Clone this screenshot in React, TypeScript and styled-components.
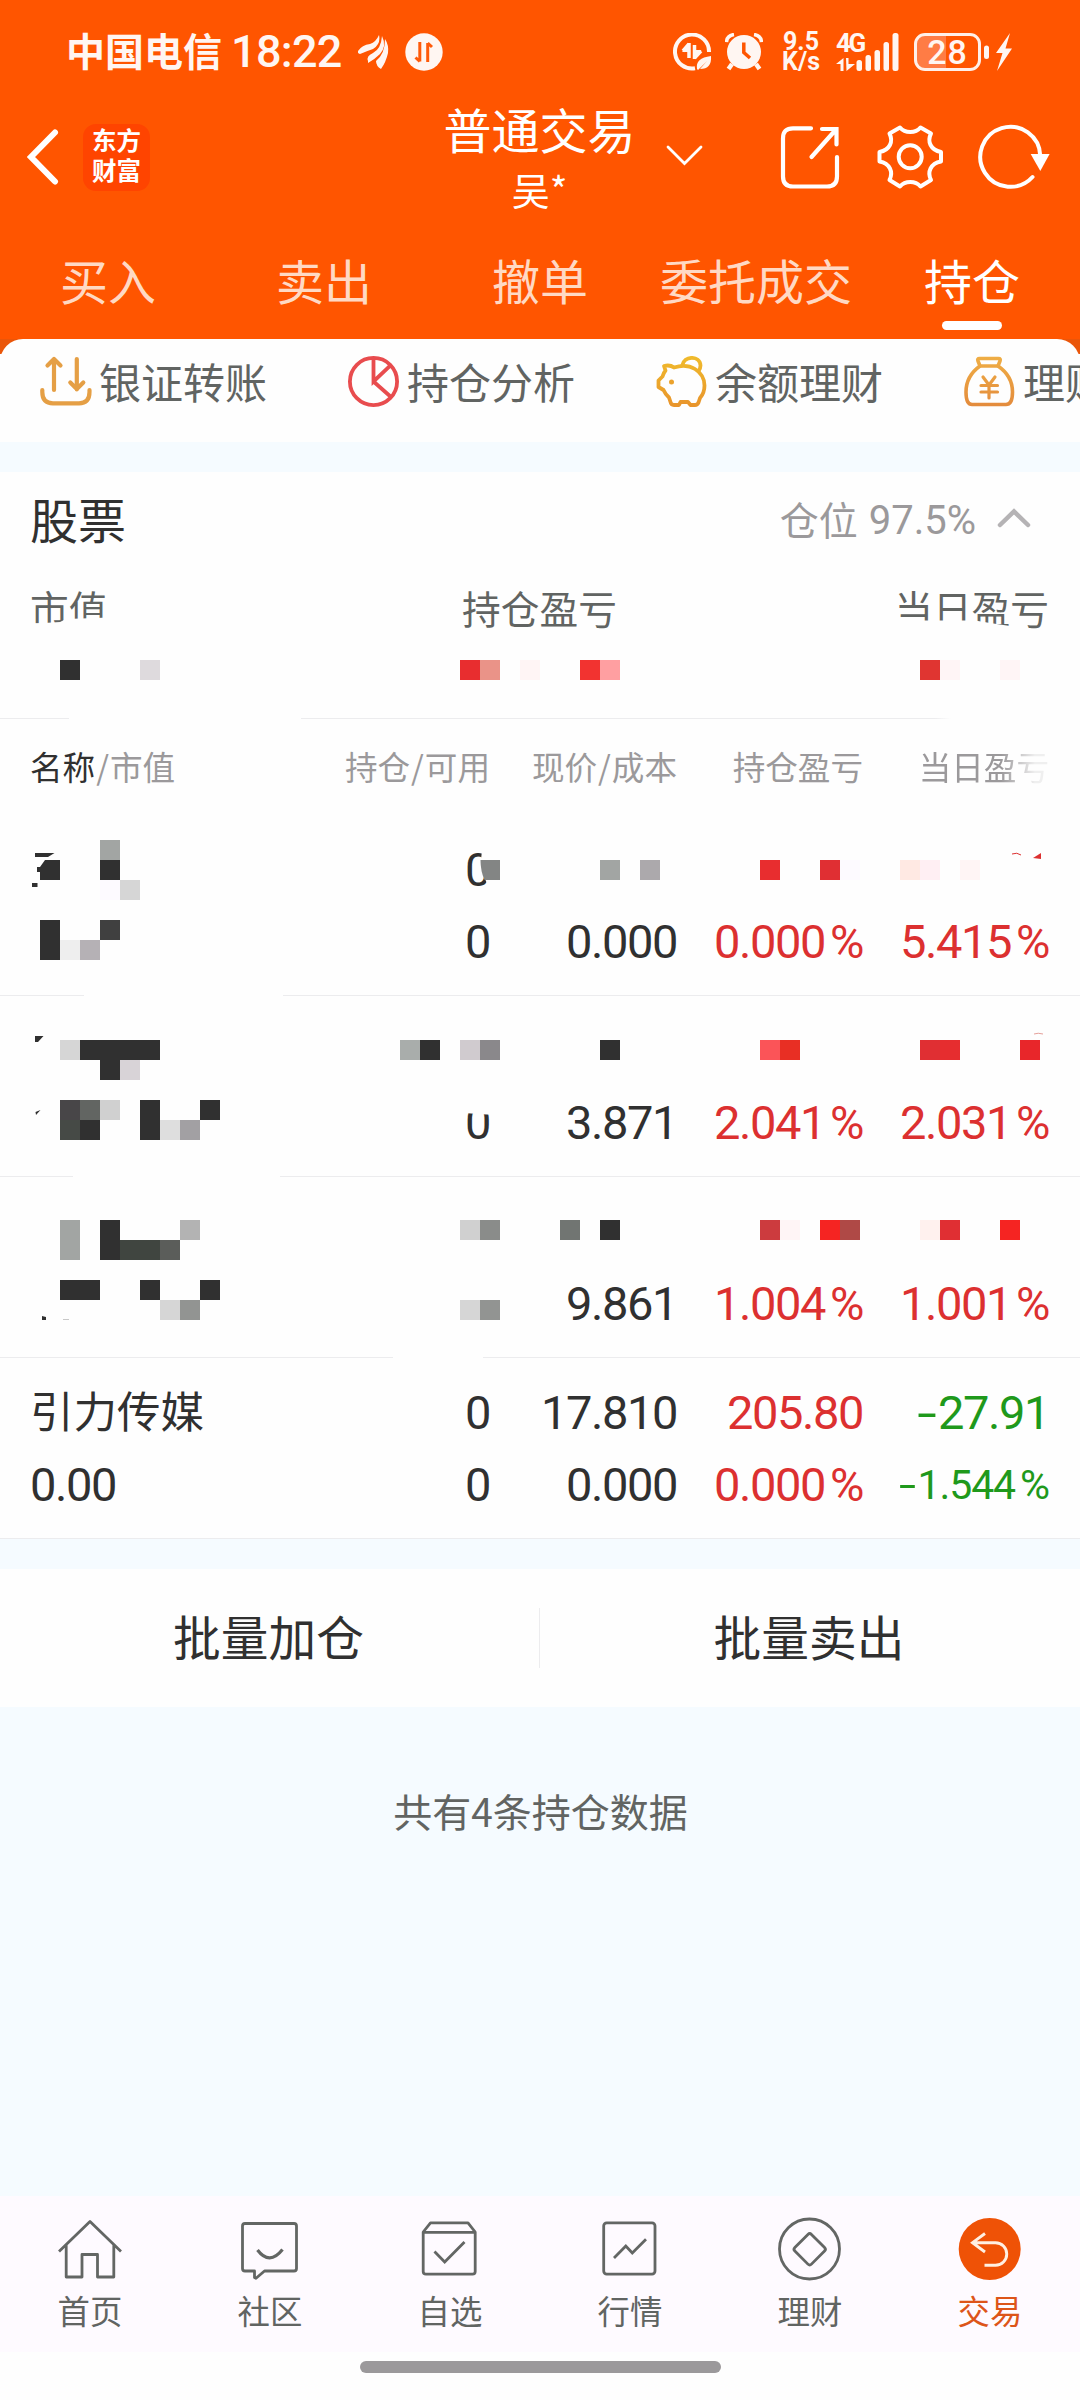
import React from "react";
import styled, { createGlobalStyle } from "styled-components";

const CJK = `"Noto Sans CJK SC", "Noto Sans", sans-serif`;
const NUM = `Roboto, "Noto Sans CJK SC", sans-serif`;

const color = {
  brand: "#ff5500",
  ink: "#303030",
  label: "#616462",
  muted: "#9b999b",
  up: "#dc3030",
  down: "#1f991b",
  band: "#f5fbff",
  line: "#ececee",
};

const GlobalStyle = createGlobalStyle`
  * { box-sizing: border-box; }
  body { margin: 0; background: #fefefe; font-family: ${CJK}; color: ${color.ink}; }
  svg { display: block; flex: none; }
`;

const Screen = styled.div`
  width: 1080px;
  height: 2400px;
  display: flex;
  flex-direction: column;
  overflow: hidden;
  background: #fefefe;
  white-space: nowrap;
`;

/* ---------- status bar ---------- */

const Top = styled.header`
  background: ${color.brand};
  color: #fff;
  height: 339px;
  flex: none;
`;

const StatusBar = styled.div`
  height: 96px;
  padding: 8px 67px 0 66px;
  display: flex;
  align-items: center;
  justify-content: space-between;
  color: #fff6f2;
`;

const StatusSide = styled.div`
  display: flex;
  align-items: center;
`;

const Carrier = styled.span`
  font-size: 39px;
  line-height: 44px;
  font-weight: 700;
  margin: -6px 9px 0 0;
`;

const Clock = styled.span`
  font: 500 45px/44px ${NUM};
  letter-spacing: -0.7px;
  margin: -1px 16px 0 0;
`;

const NetSpeed = styled.div`
  font: 700 25px/20px ${NUM};
  width: 40px;
  margin: 0 15px 0 18px;
  text-align: center;
  span { display: block; }
`;

const SignalBox = styled.div`
  display: flex;
  flex-direction: column;
  width: 64px;
  margin-right: 14px;
  height: 40px;
  position: relative;
`;

const SignalTag = styled.span`
  position: absolute;
  left: 0;
  top: 0;
  font: 700 26px/22px ${NUM};
  letter-spacing: -2.5px;
`;

const Battery = styled.div`
  width: 67px;
  height: 38px;
  border: 3px solid #fff0ea;
  border-radius: 11px;
  margin-right: 3px;
  display: flex;
  align-items: center;
  justify-content: center;
  background: linear-gradient(90deg, #ff7c45 0 29px, transparent 29px);
  font: 500 34px/32px ${NUM};
  letter-spacing: 1px;
`;

/* ---------- title bar ---------- */

const TitleBar = styled.div`
  height: 122px;
  display: grid;
  grid-template-columns: 400px 264px 1fr;
`;

const BarSide = styled.div`
  display: flex;
  align-items: center;
`;

const Logo = styled.div`
  width: 67px;
  height: 67px;
  margin-left: 24px;
  border-radius: 13px;
  background: #ff4400;
  display: flex;
  flex-direction: column;
  align-items: center;
  justify-content: center;
  font-size: 24.5px;
  line-height: 30px;
  font-weight: 700;
  padding-bottom: 5px;
`;

const Account = styled.div`
  padding-left: 15px;
  text-align: center;
  font-size: 48px;
  line-height: 64px;
`;

const Holder = styled.div`
  font-size: 38px;
  line-height: 58px;
`;

const ShareSlot = styled.div` margin-left: 74px; `;
const GearSlot = styled.div` margin: 0 32px 0 33px; `;

const Tabs = styled.nav`
  display: grid;
  grid-template-columns: repeat(5, 216px);
`;

const Tab = styled.div<{ $active?: boolean }>`
  padding-top: 30px;
  display: flex;
  flex-direction: column;
  align-items: center;
  font-size: 48px;
  line-height: 63px;
  color: ${(p) => (p.$active ? "#fff" : "#ffd9c4")};
  &::after {
    content: "";
    width: 60px;
    height: 9px;
    margin-top: 10px;
    border-radius: 5px;
    background: ${(p) => (p.$active ? "#fff" : "transparent")};
  }
`;

/* ---------- shortcuts ---------- */

const CardEdge = styled.div`
  height: 15px;
  flex: none;
  overflow: hidden;
  background: #ea560a;
  &::before {
    content: "";
    display: block;
    height: 30px;
    border-radius: 23px 23px 0 0;
    background: #fefefe;
  }
`;

const Shortcuts = styled.div`
  height: 88px;
  flex: none;
  display: flex;
  padding-left: 40px;
`;

const Shortcut = styled.div`
  flex: 0 0 308px;
  display: flex;
  gap: 7px;
  padding-top: 2px;
  font-size: 42px;
  line-height: 50px;
  color: ${color.label};
`;

const Band = styled.div<{ $h: number }>`
  height: ${(p) => p.$h}px;
  flex: none;
  background: ${color.band};
`;

/* ---------- holdings summary ---------- */

const SectionHead = styled.div`
  height: 92px;
  flex: none;
  display: flex;
  align-items: center;
  justify-content: space-between;
  padding: 0 49px 0 30px;
`;

const SectionTitle = styled.h2`
  margin: -1px 0 0;
  font-size: 48px;
  line-height: 60px;
  font-weight: 400;
`;

const Position = styled.div`
  display: flex;
  align-items: center;
  font-size: 39px;
  line-height: 50px;
  color: ${color.muted};
`;

const PositionValue = styled.span`
  font: 400 40px/50px ${NUM};
  margin: 5px 21px 0 11px;
`;

const Summary = styled.div`
  position: relative;
  height: 154px;
  flex: none;
  display: grid;
  grid-template-columns: 1fr 1fr 1fr;
  padding: 14px 31px 0 30px;
  font-size: 38.7px;
  line-height: 58px;
  color: ${color.label};
`;

const SummaryLabel = styled.span<{ $align: string }>`
  text-align: ${(p) => p.$align};
`;

const Rule = styled.div<{ $from?: number; $to?: number; $tail?: number }>`
  height: 1px;
  flex: none;
  background: ${(p) =>
    `linear-gradient(90deg, ${color.line} ${p.$from ?? 0}px, transparent ${p.$from ?? 0}px ${p.$to ?? 0}px, ${color.line} ${p.$to ?? 0}px ${p.$tail ?? 1080}px, transparent ${(p.$tail ?? 1080) + 16}px)`};
`;

/* ---------- table ---------- */

const gridColumns = "280px 180px 187px 186px 186px";

const HeadRow = styled.div`
  height: 96px;
  flex: none;
  display: grid;
  grid-template-columns: ${gridColumns};
  align-items: center;
  padding: 0 0 2px 30px;
  font-size: 32.6px;
  line-height: 44px;
  color: ${color.muted};
  text-align: right;
  span:first-child { text-align: left; }
  b { font-weight: 400; color: ${color.ink}; }
  i { font-style: normal; margin: 0 1px; }
`;

const Fading = styled.span`
  -webkit-mask-image: linear-gradient(90deg, #000 138px, rgba(0, 0, 0, 0.15) 172px);
  mask-image: linear-gradient(90deg, #000 138px, rgba(0, 0, 0, 0.15) 172px);
`;

const Row = styled.div`
  position: relative;
  height: 180px;
  flex: none;
  display: grid;
  grid-template-columns: ${gridColumns};
  grid-template-rows: 72px 72px;
  padding: 19px 0 0 30px;
`;

const Cell = styled.span<{ $tone?: string; $small?: boolean; $left?: boolean }>`
  font: 400 ${(p) => (p.$small ? 41 : 47)}px/72px ${NUM};
  letter-spacing: ${(p) => (p.$small ? -1.1 : -1.4)}px;
  color: ${(p) => p.$tone ?? color.ink};
  text-align: ${(p) => (p.$left ? "left" : "right")};
`;

const Minus = styled.span`
  display: inline-block;
  transform: scaleX(1.5);
  transform-origin: right center;
  margin: 0 3px 0 5px;
`;

const Percent = styled.span`
  margin-left: 5px;
`;

const StockName = styled.span`
  font-size: 43.5px;
  line-height: 66px;
`;

const Overlay = styled.svg`
  position: absolute;
  left: 0;
  top: 0;
`;

/* ---------- actions and footer ---------- */

const Actions = styled.div`
  height: 138px;
  flex: none;
  display: grid;
  grid-template-columns: 539px 1px 540px;
  align-items: center;
  text-align: center;
  font-size: 47.7px;
  line-height: 60px;
  padding-bottom: 5px;
  span { margin-left: -2px; }
`;

const Separator = styled.div`
  height: 60px;
  margin-top: 5px;
  background: ${color.line};
`;

const Note = styled.div`
  flex: 1;
  background: ${color.band};
  text-align: center;
  padding: 74px 0 0 1px;
  font-size: 39px;
  line-height: 58px;
  color: ${color.label};
`;

const NavBar = styled.nav`
  height: 156px;
  flex: none;
  display: grid;
  grid-template-columns: repeat(6, 180px);
  background: #fefaff;
`;

const NavItem = styled.div<{ $active?: boolean }>`
  display: flex;
  flex-direction: column;
  align-items: center;
  padding-top: 21px;
  font-size: 32.4px;
  line-height: 44px;
  color: ${(p) => (p.$active ? "#dd5519" : color.label)};
  svg { margin-bottom: 7px; }
`;

const GestureArea = styled.div`
  height: 48px;
  flex: none;
  display: flex;
  justify-content: center;
  padding-top: 9px;
  background: #fefefe;
`;

const GestureBar = styled.div`
  width: 361px;
  height: 12px;
  border-radius: 6px;
  background: ${color.muted};
`;

/* ---------- mosaics ---------- */

type Tile = [x: number, y: number, fill: string, w?: number, h?: number];

const D = "#303030";

const Tiles = ({ items }: { items: Tile[] }) => (
  <g shapeRendering="crispEdges">
    {items.map(([x, y, fill, w = 20, h = 20]) => (
      <rect key={`${x}-${y}`} x={x} y={y} width={w} height={h} fill={fill} />
    ))}
  </g>
);

const summaryTiles: Tile[] = [
  [60, 660, D], [140, 660, "#dedadd"], [460, 660, "#e82d2f"], [480, 660, "#ea9388"],
  [520, 660, "#fff5f5"], [580, 660, "#f23330"], [600, 660, "#ff9fa1"],
  [920, 660, "#e03531"], [940, 660, "#fff5f6"], [1000, 660, "#fff5f6"],
];

const rowOneTiles: Tile[] = [
  [100, 840, "#a2a5a3"], [100, 860, D], [100, 880, "#fdfaff"], [120, 880, "#d6d6d6"],
  [40, 920, D, 20, 40], [60, 940, "#eeeeee"], [80, 940, "#b5b1b5"], [100, 920, "#404040"],
  [600, 860, "#a2a5a3"], [640, 860, "#aca9ac"], [760, 860, "#e82d2f"], [820, 860, "#e02f33"],
  [840, 860, "#fdfaff"], [900, 860, "#ffe9e3"], [920, 860, "#ffeff3"], [960, 860, "#fff5f5"],
];

const rowTwoTiles: Tile[] = [
  [60, 1040, "#d6d6d6"], [80, 1040, D, 80], [100, 1060, D], [120, 1060, "#d8d3d7"],
  [60, 1100, "#484648"], [80, 1100, "#626562"], [100, 1100, "#d0d0d0"], [60, 1120, "#464a46"],
  [80, 1120, D], [140, 1100, D, 20, 40], [160, 1120, "#dedede"], [180, 1120, "#a2a0a3"],
  [200, 1100, D], [400, 1040, "#a9adab"], [420, 1040, D], [460, 1040, "#d0cbcf"],
  [480, 1040, "#8a888b"], [600, 1040, D], [760, 1040, "#fb5458"], [780, 1040, "#e82f24"],
  [920, 1040, "#e02f33"], [940, 1040, "#e62d2f"], [1020, 1040, "#e8262a"],
];

const rowThreeTiles: Tile[] = [
  [60, 1220, "#a2a5a3", 20, 40], [100, 1220, D, 20, 40], [120, 1240, "#404540", 40],
  [160, 1240, "#5b5d5a"], [180, 1220, "#b3b3b3"], [60, 1280, D, 40], [140, 1280, D],
  [160, 1300, "#d6d6d6"], [180, 1300, "#929492"], [200, 1280, D], [460, 1220, "#d0d0d0"],
  [480, 1220, "#8a8c8a"], [460, 1300, "#d6d6d6"], [480, 1300, "#929492"],
  [560, 1220, "#717572"], [600, 1220, D], [760, 1220, "#cc3b3e"], [780, 1220, "#fff5f6"],
  [820, 1220, "#f52422"], [840, 1220, "#af4946"], [920, 1220, "#fff1ee"],
  [940, 1220, "#e02f33"], [1000, 1220, "#f52422"],
];

/* ---------- icons ---------- */

const WingIcon = () => (
  <svg width="32" height="36" viewBox="0 0 32 36" fill="currentColor" style={{ marginRight: 15 }}>
    <path d="M0 17Q4 11 12 10Q18 8 21 1Q23 10 15 15Q9 17 2 20Q-1 19 0 17Z" />
    <path d="M10 27Q8 22 15 19Q23 15 24 2Q29 12 22 20Q17 25 10 29Z" />
    <path d="M27 5Q31 11 30 19Q28 28 23 35Q18 32 18 27Q27 20 27 5Z" />
  </svg>
);

const SwapBadge = () => (
  <svg width="38" height="38" viewBox="0 0 38 38">
    <circle cx="19" cy="19" r="18.7" fill="#fff6f2" />
    <path d="M14.8 9V28.5M14.8 28.5L10.5 24.5M22.7 29V10M22.7 10L27 14" fill="none" stroke="#ff5a0a" strokeWidth="3" />
  </svg>
);

const DataSaverIcon = () => (
  <svg width="39" height="38" viewBox="0 0 39 38" fill="none" style={{ marginRight: 13 }}>
    <path d="M22 35.3A17 17 0 1 1 36 19" stroke="#fff6f2" strokeWidth="4" />
    <path d="M16 10V25M10 18L16 11M21.5 12V26M28 18L21.5 25" stroke="#fff6f2" strokeWidth="3.5" />
    <path d="M9 19L16.500 10V19ZM21 26V17H28.500Z" fill="#fff6f2" />
    <path d="M24 36Q22 25 38 23Q39 36 27 36L34 28L25 37Z" fill="#fff6f2" />
  </svg>
);

const AlarmIcon = () => (
  <svg width="38" height="38" viewBox="0 0 38 38" fill="none">
    <circle cx="19" cy="19" r="17" fill="#fff6f2" />
    <path d="M1.500 9Q2 2.500 9 1.500M36.500 9Q36 2.500 29 1.500" stroke="#fff6f2" strokeWidth="3.5" />
    <path d="M7 31L3.500 36M31 31L34.500 36" stroke="#fff6f2" strokeWidth="4.500" />
    <path d="M18.800 9.500V19.500L25 25" stroke="#ff5500" strokeWidth="3.500" />
  </svg>
);

const SignalIcon = () => (
  <svg width="64" height="40" viewBox="0 0 64 40" fill="currentColor">
    <path d="M0 32L7.500 26V39H4.500V32ZM10 26H12.500V32H19L10.500 39Z" />
    <rect x="20.500" y="28" width="5.500" height="11" rx="2.500" />
    <rect x="29.500" y="23" width="5.500" height="16" rx="2.500" />
    <rect x="38.500" y="18" width="5.500" height="21" rx="2.500" />
    <rect x="47.500" y="10" width="5.500" height="29" rx="2.500" />
    <rect x="56.500" y="1" width="6" height="38" rx="2.500" />
  </svg>
);

const ChargeIcon = () => (
  <svg width="29" height="38" viewBox="0 0 29 38" fill="currentColor">
    <rect x="0" y="12.500" width="5" height="13.500" rx="2.500" />
    <path d="M26 0L12 20H18.500L13 38L28 15.500H21.500Z" />
  </svg>
);

const BackIcon = () => (
  <svg width="32" height="56" viewBox="0 0 32 56" fill="none" stroke="#fff" strokeWidth="6" strokeLinecap="round" style={{ marginLeft: 27 }}>
    <path d="M28 3.500L4 28L28 52.500" />
  </svg>
);

const DownIcon = () => (
  <svg width="40" height="24" viewBox="0 0 40 24" fill="none" stroke="#fff" strokeWidth="2.800" strokeLinecap="round">
    <path d="M4 2L20.500 18.500L37 2" />
  </svg>
);

const ShareIcon = () => (
  <svg width="66" height="66" viewBox="0 0 66 66" fill="none" stroke="#fff" strokeWidth="4.200" strokeLinecap="round">
    <path d="M33 4.300H15Q5 4.300 5 14.300V52.500Q5 62.500 15 62.500H49Q59 62.500 59 52.500V33" />
    <path d="M33.500 33L58 5.500M44 5H58.500V20.500" />
  </svg>
);

const GearIcon = () => (
  <svg width="67" height="66" viewBox="0 0 67 66" fill="none" stroke="#fff" strokeWidth="4" strokeLinejoin="round">
    <path d="M23 3.500C28 9.500 38.500 9.500 43.500 3.500L54 9.500C50 17.500 53.500 26 64 28V37.500C53.500 39.500 50 48 54 56L43.500 62.500C38.500 56.500 28 56.500 23 62.500L12.500 56C16.500 48 13 39.500 2.500 37.500V28C13 26 16.500 17.500 12.500 9.500Z" />
    <circle cx="33.200" cy="32.700" r="11.500" />
  </svg>
);

const RefreshIcon = () => (
  <svg width="76" height="66" viewBox="0 0 76 66" fill="none">
    <path d="M56.500 53A30 30 0 1 1 64.300 32" stroke="#fff" strokeWidth="4" strokeLinecap="round" />
    <path d="M54.700 30H73.600L64.300 47Z" fill="#fff" />
  </svg>
);

const TransferIcon = () => (
  <svg width="52" height="52" viewBox="0 0 52 52" fill="none" stroke="#e59f45" strokeWidth="4.200" strokeLinecap="round" strokeLinejoin="round">
    <path d="M14 34V3M7.500 9.500L14 3L20.500 9.500M36.800 3V33.500M30.300 26.500L36.800 33L43.300 26.500" />
    <path d="M2.300 34V36Q2.300 47.300 13 47.300H39Q49.500 47.300 49.500 36V34" />
  </svg>
);

const PieIcon = () => (
  <svg width="52" height="52" viewBox="0 0 52 52" fill="none" stroke="#e84c4e" strokeWidth="3.800">
    <circle cx="25.500" cy="25.500" r="23.600" />
    <path d="M25.500 2V25.500L42.500 9.300M25.500 25.500L43 41" />
  </svg>
);

const PiggyIcon = () => (
  <svg width="52" height="52" viewBox="0 0 52 52" fill="none" stroke="url(#piggy)" strokeWidth="3.800" strokeLinejoin="round">
    <defs>
      <linearGradient id="piggy" gradientUnits="userSpaceOnUse" x1="0" y1="0" x2="0" y2="52">
        <stop offset="0" stopColor="#f0bb2c" />
        <stop offset="1" stopColor="#e8932c" />
      </linearGradient>
    </defs>
    <path d="M26 10C28 -1 44 -0.500 44.500 9.500Q44.500 12.500 42.500 15" />
    <path d="M8 10Q14 8.500 18 11.500Q30 7.500 39 13Q48.500 19 48.500 29.500Q48.500 37 44 42L42.500 46.500Q41.500 49 39 49H34.500L32 46H24.500L23 49H18Q15 49 14.500 46L13 41.500Q9.500 38.500 7.500 34L2.500 31V24.500L6.500 20.500Q7.500 17 9.500 14.500Z" />
    <circle cx="15.500" cy="26" r="2.500" fill="#eba22c" stroke="none" />
  </svg>
);

const MoneyBagIcon = () => (
  <svg width="52" height="52" viewBox="0 0 52 52" fill="none" stroke="url(#bag)" strokeWidth="3.600" strokeLinejoin="round" strokeLinecap="round">
    <defs>
      <linearGradient id="bag" gradientUnits="userSpaceOnUse" x1="0" y1="0" x2="0" y2="52">
        <stop offset="0" stopColor="#efae45" />
        <stop offset="1" stopColor="#e38a3c" />
      </linearGradient>
    </defs>
    <path d="M15.500 2.500H34.500Q37 2.500 36 5L34 10H16L14 5Q13 2.500 15.500 2.500Z" />
    <path d="M16 10Q2 20 2 36Q2 48.500 8 48.500H42Q48.500 48.500 48.500 36Q48.500 20 34 10" />
    <path d="M19 21L25 29L31 21M25 29V42M17 29.500H33.500M17 36H33.500" strokeWidth="3.200" />
  </svg>
);

const CollapseIcon = () => (
  <svg width="34" height="22" viewBox="0 0 34 22" fill="none" stroke="#b5b3b5" strokeWidth="4.500" strokeLinecap="round">
    <path d="M3 18L17 4.500L31 18" />
  </svg>
);

const navStroke = { width: 64, height: 64, viewBox: "0 0 64 64", fill: "none", stroke: "#636664", strokeWidth: 2.8, strokeLinejoin: "round" as const };

const HomeIcon = () => (
  <svg {...navStroke}>
    <path d="M1 34.500L32 4.500L63 34.500M8.200 28V60H24V37.500H39.500V60H55.800V28" />
  </svg>
);

const CommunityIcon = () => (
  <svg {...navStroke}>
    <path d="M7 6.500H56Q58.500 6.500 58.500 9V51.500Q58.500 54 56 54H26.500L18 61.300L16.500 60.500V54H7Q4.500 54 4.500 51.500V9Q4.500 6.500 7 6.500Z" />
    <path d="M19.500 33Q31.500 49 44.500 32.500" strokeWidth="3.200" />
  </svg>
);

const WatchlistIcon = () => (
  <svg {...navStroke}>
    <path d="M5.200 15L12.500 5.800H50L57.200 15V54.500Q57.200 57.200 54.500 57.200H8Q5.200 57.200 5.200 54.500ZM5.200 15.300H57.200" />
    <path d="M16.500 34.500L26.700 45L46.500 25" strokeLinejoin="miter" />
  </svg>
);

const MarketIcon = () => (
  <svg {...navStroke}>
    <rect x="5.700" y="5.800" width="51.300" height="51.300" rx="3" />
    <path d="M16 41L27.800 29L34.300 36L48 22.300" strokeLinejoin="miter" />
  </svg>
);

const WealthIcon = () => (
  <svg {...navStroke}>
    <circle cx="31.500" cy="32" r="30" />
    <rect x="20" y="20.500" width="23.500" height="23.500" rx="2.500" transform="rotate(45 31.700 32.200)" />
  </svg>
);

const TradeIcon = () => (
  <svg width="64" height="64" viewBox="0 0 64 64" fill="none">
    <circle cx="31.700" cy="32" r="31" fill="#ef5206" />
    <path d="M27 16.500L14.500 25.700L27 35M14.500 25.700H37.500A11.200 11.200 0 0 1 37.500 48.200H26.500" stroke="#fff0e2" strokeWidth="2.900" />
  </svg>
);

/* ---------- page ---------- */

const tabs = ["买入", "卖出", "撤单", "委托成交", "持仓"];

const shortcuts: [string, React.FC][] = [
  ["银证转账", TransferIcon],
  ["持仓分析", PieIcon],
  ["余额理财", PiggyIcon],
  ["理财", MoneyBagIcon],
];

const navItems: [string, React.FC][] = [
  ["首页", HomeIcon],
  ["社区", CommunityIcon],
  ["自选", WatchlistIcon],
  ["行情", MarketIcon],
  ["理财", WealthIcon],
  ["交易", TradeIcon],
];

const Blank = () => <span />;

type NumProps = { value: string; tone?: string; small?: boolean; left?: boolean };

const Num = ({ value, tone, small, left }: NumProps) => (
  <Cell $tone={tone} $small={small} $left={left}>
    {value.startsWith("-") && <Minus>-</Minus>}
    {value.replace(/[-%]/g, "")}
    {value.endsWith("%") && <Percent>%</Percent>}
  </Cell>
);

export default function App() {
  return (
    <>
      <GlobalStyle />
      <Screen>
        <Top>
          <StatusBar>
            <StatusSide>
              <Carrier>中国电信</Carrier>
              <Clock>18:22</Clock>
              <WingIcon />
              <SwapBadge />
            </StatusSide>
            <StatusSide>
              <DataSaverIcon />
              <AlarmIcon />
              <NetSpeed>
                <span>9.5</span>
                <span>K/s</span>
              </NetSpeed>
              <SignalBox>
                <SignalTag>4G</SignalTag>
                <SignalIcon />
              </SignalBox>
              <Battery>28</Battery>
              <ChargeIcon />
            </StatusSide>
          </StatusBar>
          <TitleBar>
            <BarSide>
              <BackIcon />
              <Logo>
                <span>东方</span>
                <span>财富</span>
              </Logo>
            </BarSide>
            <Account>
              普通交易
              <Holder>吴*</Holder>
            </Account>
            <BarSide>
              <DownIcon />
              <ShareSlot><ShareIcon /></ShareSlot>
              <GearSlot><GearIcon /></GearSlot>
              <RefreshIcon />
            </BarSide>
          </TitleBar>
          <Tabs>
            {tabs.map((t) => (
              <Tab key={t} $active={t === "持仓"}>{t}</Tab>
            ))}
          </Tabs>
        </Top>

        <CardEdge />
        <Shortcuts>
          {shortcuts.map(([name, Icon]) => (
            <Shortcut key={name}>
              <Icon />
              {name}
            </Shortcut>
          ))}
        </Shortcuts>
        <Band $h={30} />

        <SectionHead>
          <SectionTitle>股票</SectionTitle>
          <Position>
            仓位<PositionValue>97.5%</PositionValue>
            <CollapseIcon />
          </Position>
        </SectionHead>
        <Summary>
          <SummaryLabel $align="left">市值</SummaryLabel>
          <SummaryLabel $align="center">持仓盈亏</SummaryLabel>
          <SummaryLabel $align="right">当日盈亏</SummaryLabel>
          <Overlay width="1080" height="154" viewBox="0 564 1080 154">
            <path d="M28 624L60 622L66 619L110 617.500V632H28Z" fill="#fefefe" />
            <path d="M895 620.500H975L990 623L1010 626V634H895Z" fill="#fefefe" />
            <Tiles items={summaryTiles} />
          </Overlay>
        </Summary>
        <Rule $from={69} $to={301} $tail={935} />

        <HeadRow>
          <span><b>名称</b><i>/</i>市值</span>
          <span>持仓<i>/</i>可用</span>
          <span>现价<i>/</i>成本</span>
          <span>持仓盈亏</span>
          <Fading>当日盈亏</Fading>
        </HeadRow>

        <Row>
          <Blank /><Num value="0" /><Blank /><Blank /><Blank />
          <Blank /><Num value="0" /><Num value="0.000" /><Num tone={color.up} value="0.000%" /><Num tone={color.up} value="5.415%" />
          <Overlay width="1080" height="180" viewBox="0 815 1080 180">
            <path d="M482 850L481 860Q481 874 486 881L487 885L490 889H496V850Z" fill="#fefefe" />
            <path d="M480.500 860H500V880H484.500Q480.500 871 480.500 860Z" fill="#838584" />
            <path d="M35 853H54.500L48 857H35ZM45 860H60V880H40V872H37V867H40ZM32 883H37.500V887H32Z" fill={D} />
            <path d="M1033 858L1041 853V859Z" fill={color.up} />
            <path d="M1012 854Q1017 852 1021 855" stroke={color.up} fill="none" />
            <Tiles items={rowOneTiles} />
          </Overlay>
        </Row>
        <Rule $from={84} $to={283} />

        <Row>
          <Blank /><Blank /><Blank /><Blank /><Blank />
          <Blank /><Num value="0" /><Num value="3.871" /><Num tone={color.up} value="2.041%" /><Num tone={color.up} value="2.031%" />
          <Overlay width="1080" height="180" viewBox="0 996 1080 180">
            <path d="M464 1100H496V1115L478 1114L464 1113Z" fill="#fefefe" />
            <path d="M35 1036H43.500L38 1042H35ZM35.500 1112L40.500 1110L36 1115Z" fill={D} />
            <path d="M1034 1034Q1038 1032.500 1043 1034" stroke="#e5a09a" fill="none" />
            <Tiles items={rowTwoTiles} />
          </Overlay>
        </Row>
        <Rule $from={73} $to={280} />

        <Row>
          <Blank /><Blank /><Blank /><Blank /><Blank />
          <Blank /><Blank /><Num value="9.861" /><Num tone={color.up} value="1.004%" /><Num tone={color.up} value="1.001%" />
          <Overlay width="1080" height="180" viewBox="0 1177 1080 180">
            <path d="M42 1316L46 1317V1320H42Z" fill={D} />
            <path d="M63 1319.500H69" stroke="#c8c8c8" />
            <Tiles items={rowThreeTiles} />
          </Overlay>
        </Row>
        <Rule $from={393} $to={483} />

        <Row>
          <StockName>引力传媒</StockName><Num value="0" /><Num value="17.810" /><Num tone={color.up} value="205.80" /><Num tone={color.down} value="-27.91" />
          <Num left value="0.00" /><Num value="0" /><Num value="0.000" /><Num tone={color.up} value="0.000%" /><Num tone={color.down} small value="-1.544%" />
        </Row>
        <Rule />
        <Band $h={30} />

        <Actions>
          <span>批量加仓</span>
          <Separator />
          <span>批量卖出</span>
        </Actions>
        <Note>共有4条持仓数据</Note>

        <NavBar>
          {navItems.map(([name, Icon]) => (
            <NavItem key={name} $active={name === "交易"}>
              <Icon />
              {name}
            </NavItem>
          ))}
        </NavBar>
        <GestureArea>
          <GestureBar />
        </GestureArea>
      </Screen>
    </>
  );
}
